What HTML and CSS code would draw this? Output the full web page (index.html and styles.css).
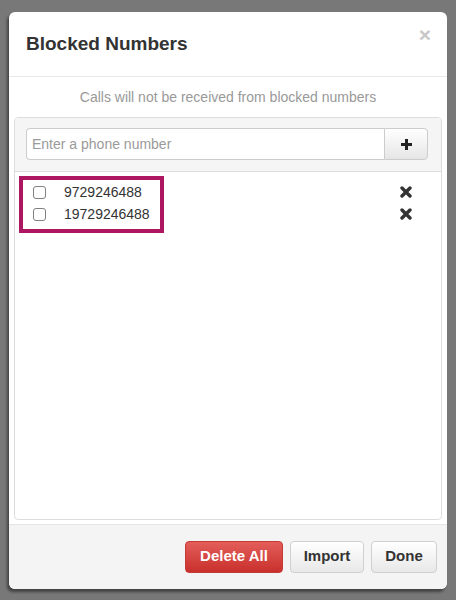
FILE: index.html
```html
<!DOCTYPE html>
<html>
<head>
<meta charset="utf-8">
<link rel="stylesheet" href="styles.css">
</head>
<body>
<div class="modal">
  <div class="modal-header">
    <h1 class="title">Blocked Numbers</h1>
    <span class="close">×</span>
  </div>
  <div class="modal-body">
    <div class="subtitle">Calls will not be received from blocked numbers</div>
    <div class="panel">
      <div class="panel-heading">
        <div class="input-group">
          <input class="phone-input" type="text" placeholder="Enter a phone number">
          <button class="add-btn" type="button">
            <svg width="13" height="13" viewBox="0 0 13 13"><path d="M6.5 1v11M1 6.5h11" stroke="#222" stroke-width="3"/></svg>
          </button>
        </div>
      </div>
      <div class="panel-body">
        <div class="row">
          <span class="check"></span>
          <span class="number">9729246488</span>
          <svg class="remove" width="12" height="12" viewBox="0 0 12 12"><path d="M2 2L10 10M10 2L2 10" stroke="#333" stroke-width="3.4" stroke-linecap="round"/></svg>
        </div>
        <div class="row">
          <span class="check"></span>
          <span class="number">19729246488</span>
          <svg class="remove" width="12" height="12" viewBox="0 0 12 12"><path d="M2 2L10 10M10 2L2 10" stroke="#333" stroke-width="3.4" stroke-linecap="round"/></svg>
        </div>
        <div class="highlight"></div>
      </div>
    </div>
  </div>
  <div class="modal-footer">
    <button class="btn btn-danger" type="button">Delete All</button>
    <button class="btn btn-default" type="button">Import</button>
    <button class="btn btn-default" type="button">Done</button>
  </div>
</div>
</body>
</html>
```
FILE: styles.css
```css
html, body {
  margin: 0;
  padding: 0;
}
body {
  background: #787878;
  font-family: "Liberation Sans", Arial, sans-serif;
  height: 600px;
  overflow: hidden;
}
.modal {
  margin: 12px 0 0 9px;
  width: 438px;
  height: 577px;
  background: #fff;
  border-radius: 6px;
  box-shadow: -2px 3px 3px rgba(0, 0, 0, 0.45);
  display: flex;
  flex-direction: column;
  overflow: hidden;
}
.modal-header {
  height: 64px;
  flex: none;
  border-bottom: 1px solid #e8e8e8;
  padding: 0 17px;
  display: flex;
  align-items: center;
  position: relative;
}
.title {
  margin: 0;
  font-size: 19px;
  font-weight: bold;
  color: #333;
}
.close {
  position: absolute;
  right: 16px;
  top: 12px;
  font-size: 21px;
  line-height: 22px;
  font-weight: bold;
  color: #c8c8c8;
}
.modal-body {
  flex: 1;
  padding: 0 5px 4px;
  display: flex;
  flex-direction: column;
}
.subtitle {
  height: 40px;
  line-height: 40px;
  text-align: center;
  font-size: 14px;
  color: #999;
}
.panel {
  flex: 1;
  border: 1px solid #ddd;
  border-radius: 4px;
  display: flex;
  flex-direction: column;
}
.panel-heading {
  background: #f5f5f5;
  border-bottom: 1px solid #ddd;
  border-radius: 3px 3px 0 0;
  padding: 10px 13px 11px 11px;
}
.input-group {
  display: flex;
  height: 32px;
}
.phone-input {
  flex: 1;
  min-width: 0;
  box-sizing: border-box;
  height: 32px;
  margin: 0;
  border: 1px solid #ccc;
  border-right: none;
  border-radius: 4px 0 0 4px;
  padding: 0 5px;
  font-family: "Liberation Sans", Arial, sans-serif;
  font-size: 14px;
  color: #333;
  background: #fff;
  outline: none;
}
.phone-input::placeholder {
  color: #9a9a9a;
}
.add-btn {
  width: 44px;
  height: 32px;
  box-sizing: border-box;
  margin: 0;
  padding: 0;
  border: 1px solid #ccc;
  border-radius: 0 4px 4px 0;
  background: linear-gradient(#fff, #e6e6e6);
  display: flex;
  align-items: center;
  justify-content: center;
}
.panel-body {
  flex: 1;
  position: relative;
  padding-top: 9px;
}
.row {
  display: flex;
  align-items: center;
  height: 22px;
  padding: 0 29px 0 18px;
  font-size: 14px;
  color: #333;
}
.check {
  width: 13px;
  height: 13px;
  box-sizing: border-box;
  border: 1px solid #808080;
  border-radius: 3px;
  background: #fff;
  margin-right: 18px;
}
.number {
  flex: 1;
}
.remove {
  display: block;
}
.highlight {
  position: absolute;
  left: 4px;
  top: 4px;
  width: 145px;
  height: 57px;
  box-sizing: border-box;
  border: 4px solid #ad1660;
}
.modal-footer {
  flex: none;
  height: 65px;
  box-sizing: border-box;
  border-top: 1px solid #e5e5e5;
  background: #f4f4f4;
  padding: 16px 10px;
  display: flex;
  justify-content: flex-end;
  gap: 7px;
}
.btn {
  height: 32px;
  box-sizing: border-box;
  margin: 0;
  border-radius: 4px;
  font-family: "Liberation Sans", Arial, sans-serif;
  font-size: 15px;
  line-height: 28px;
  font-weight: bold;
  padding: 0 0 2px;
}
.btn-danger {
  width: 98px;
  color: #fff;
  border: 1px solid #c33a36;
  background: linear-gradient(#e35d59, #c9302c);
}
.btn-default {
  color: #333;
  border: 1px solid #d0d0d0;
  background: linear-gradient(#fff, #e8e8e8);
}
.btn-default:nth-child(2) {
  width: 74px;
}
.btn-default:nth-child(3) {
  width: 66px;
}
```
